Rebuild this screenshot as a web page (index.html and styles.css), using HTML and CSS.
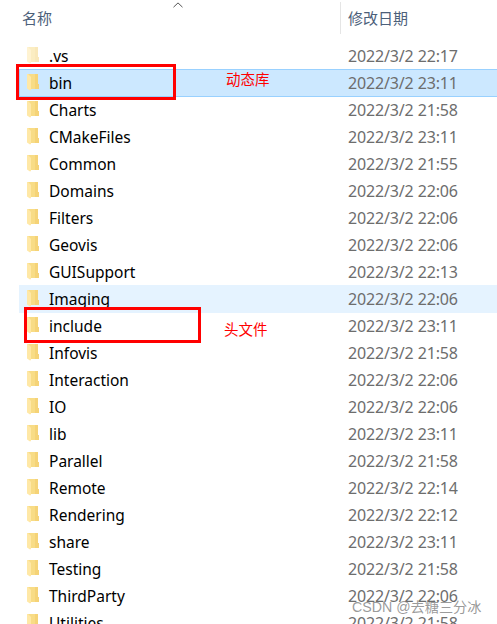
FILE: index.html
```
<!DOCTYPE html>
<html lang="zh-CN">
<head>
    <meta charset="UTF-8">
    <meta name="viewport" content="width=device-width, initial-scale=1.0">
    <title>文件列表</title>
    <link rel="stylesheet" href="styles.css">
</head>
<body>
    <svg class="symbols" width="0" height="0">
        <symbol id="folder" viewBox="0 0 12 17">
            <path d="M0 0h11v10h1v5H3z" fill="#f8dc86"/>
            <path d="M8 0h3v10h1v5H8z" fill="#f5d377"/>
            <path d="M0 0l1 0 3 3v13l-1 .5L0 14.500z" fill="#ffe8a6"/>
        </symbol>
    </svg>

    <div class="explorer">
        <div class="header">
            <div class="col-name">名称</div>
            <div class="col-date">修改日期</div>
            <svg class="sort" width="10" height="6" viewBox="0 0 10 6"><path d="M.5 5.200L5 .9l4.500 4.300" fill="none" stroke="#555" stroke-width="1"/></svg>
        </div>

        <div class="list">
            <div class="row hidden"><svg class="icon"><use href="#folder"/></svg><span class="name">.vs</span><span class="date">2022/3/2 22:17</span></div>
            <div class="row selected"><svg class="icon"><use href="#folder"/></svg><span class="name">bin</span><span class="date">2022/3/2 23:11</span></div>
            <div class="row"><svg class="icon"><use href="#folder"/></svg><span class="name">Charts</span><span class="date">2022/3/2 21:58</span></div>
            <div class="row"><svg class="icon"><use href="#folder"/></svg><span class="name">CMakeFiles</span><span class="date">2022/3/2 23:11</span></div>
            <div class="row"><svg class="icon"><use href="#folder"/></svg><span class="name">Common</span><span class="date">2022/3/2 21:55</span></div>
            <div class="row"><svg class="icon"><use href="#folder"/></svg><span class="name">Domains</span><span class="date">2022/3/2 22:06</span></div>
            <div class="row"><svg class="icon"><use href="#folder"/></svg><span class="name">Filters</span><span class="date">2022/3/2 22:06</span></div>
            <div class="row"><svg class="icon"><use href="#folder"/></svg><span class="name">Geovis</span><span class="date">2022/3/2 22:06</span></div>
            <div class="row"><svg class="icon"><use href="#folder"/></svg><span class="name">GUISupport</span><span class="date">2022/3/2 22:13</span></div>
            <div class="row hover"><svg class="icon"><use href="#folder"/></svg><span class="name">Imaging</span><span class="date">2022/3/2 22:06</span></div>
            <div class="row"><svg class="icon"><use href="#folder"/></svg><span class="name">include</span><span class="date">2022/3/2 23:11</span></div>
            <div class="row"><svg class="icon"><use href="#folder"/></svg><span class="name">Infovis</span><span class="date">2022/3/2 21:58</span></div>
            <div class="row"><svg class="icon"><use href="#folder"/></svg><span class="name">Interaction</span><span class="date">2022/3/2 22:06</span></div>
            <div class="row"><svg class="icon"><use href="#folder"/></svg><span class="name">IO</span><span class="date">2022/3/2 22:06</span></div>
            <div class="row"><svg class="icon"><use href="#folder"/></svg><span class="name">lib</span><span class="date">2022/3/2 23:11</span></div>
            <div class="row"><svg class="icon"><use href="#folder"/></svg><span class="name">Parallel</span><span class="date">2022/3/2 21:58</span></div>
            <div class="row"><svg class="icon"><use href="#folder"/></svg><span class="name">Remote</span><span class="date">2022/3/2 22:14</span></div>
            <div class="row"><svg class="icon"><use href="#folder"/></svg><span class="name">Rendering</span><span class="date">2022/3/2 22:12</span></div>
            <div class="row"><svg class="icon"><use href="#folder"/></svg><span class="name">share</span><span class="date">2022/3/2 23:11</span></div>
            <div class="row"><svg class="icon"><use href="#folder"/></svg><span class="name">Testing</span><span class="date">2022/3/2 21:58</span></div>
            <div class="row"><svg class="icon"><use href="#folder"/></svg><span class="name">ThirdParty</span><span class="date">2022/3/2 22:06</span></div>
            <div class="row"><svg class="icon"><use href="#folder"/></svg><span class="name">Utilities</span><span class="date">2022/3/2 21:58</span></div>
        </div>

        <div class="mark mark-bin"></div>
        <div class="mark mark-include"></div>
        <div class="note note-bin">动态库</div>
        <div class="note note-include">头文件</div>
        <div class="watermark">CSDN @去糖三分冰</div>
    </div>
</body>
</html>
```
FILE: styles.css
```
body {
    margin: 0;
    background-color: #fff;
    font-family: "Noto Sans", "Noto Sans CJK SC", sans-serif;
    font-size: 15.5px;
    color: #000;
    overflow: hidden;
}

.symbols {
    position: absolute;
}

.explorer {
    position: relative;
    height: 624px;
    overflow: hidden;
}

.header {
    display: flex;
    height: 42px;
    font-family: "Noto Sans CJK SC", sans-serif;
    font-size: 15px;
    line-height: 36px;
    color: #4c607a;
}

.col-name {
    width: 318px;
    padding-left: 22px;
}

.col-date {
    height: 32px;
    margin-top: 2px;
    padding-left: 7px;
    border-left: 1px solid #e5e5e5;
    line-height: 32px;
}

.sort {
    position: absolute;
    left: 173px;
    top: 2px;
}

.row {
    display: flex;
    box-sizing: border-box;
    height: 28px;
    margin: 0 0 -1px 19px;
    padding-left: 8px;
    line-height: 29px;
    white-space: nowrap;
}

.selected {
    background-color: #cce8ff;
    border: 1px solid #99d1ff;
    border-right: none;
    padding-left: 7px;
    line-height: 27px;
}

.selected .icon {
    margin-top: 4px;
}

.hover {
    background-color: #e5f3ff;
}

.icon {
    width: 12px;
    height: 17px;
    margin: 5px 10px 0 0;
}

.hidden .icon {
    opacity: 0.5;
}

.name {
    width: 299px;
}

.date {
    font-size: 16px;
    color: #6d6d6d;
    letter-spacing: -0.15px;
}

/* red annotations over the list */
.mark {
    position: absolute;
    box-sizing: border-box;
    border: 3px solid #f00;
}

.mark-bin {
    left: 16px;
    top: 64px;
    width: 160px;
    height: 36px;
}

.mark-include {
    left: 24px;
    top: 307px;
    width: 177px;
    height: 36px;
}

.note {
    position: absolute;
    font-family: "Noto Sans CJK SC", sans-serif;
    font-size: 14.5px;
    line-height: 20px;
    color: #f00;
}

.note-bin {
    left: 226px;
    top: 69px;
}

.note-include {
    left: 224px;
    top: 319px;
}

.watermark {
    position: absolute;
    left: 352px;
    top: 597px;
    font-family: "Liberation Sans", "Noto Sans CJK SC", sans-serif;
    font-size: 14.2px;
    line-height: 20px;
    color: rgba(110, 110, 110, 0.7);
    white-space: nowrap;
}
```
